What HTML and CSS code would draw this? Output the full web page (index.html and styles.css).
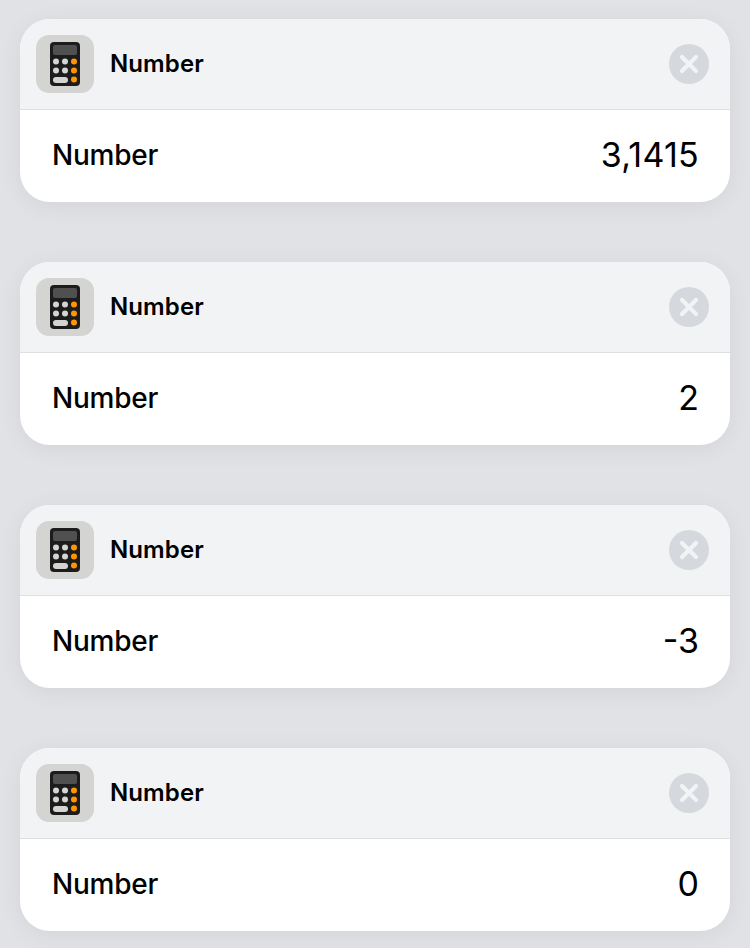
FILE: index.html
```html
<!DOCTYPE html>
<html lang="en">
<head>
<meta charset="utf-8">
<title>Number</title>
<link rel="stylesheet" href="styles.css">
</head>
<body>
<svg class="defs" width="0" height="0" aria-hidden="true">
  <symbol id="calc" viewBox="0 0 58 58">
    <rect x="14" y="7" width="30" height="44" rx="4" fill="#1c1c1c"/>
    <rect x="17" y="10" width="24" height="10" rx="2" fill="#505050"/>
    <g fill="#d4d4d2">
      <circle cx="20" cy="26.5" r="3"/><circle cx="29" cy="26.5" r="3"/>
      <circle cx="20" cy="35.5" r="3"/><circle cx="29" cy="35.5" r="3"/>
      <rect x="17" y="42" width="15" height="6" rx="3"/>
    </g>
    <g fill="#ff9500">
      <circle cx="38" cy="26.5" r="3"/><circle cx="38" cy="35.5" r="3"/><circle cx="38" cy="44.5" r="3"/>
    </g>
  </symbol>
  <symbol id="close" viewBox="0 0 40 40">
    <circle cx="20" cy="20" r="20" fill="#d5d8dd"/>
    <path d="M13 13 27 27M27 13 13 27" stroke="#f2f3f5" stroke-width="4.2" stroke-linecap="round"/>
  </symbol>
</svg>
<main class="list">
  <section class="card">
    <header class="head"><svg class="icon"><use href="#calc"/></svg><h2 class="title">Number</h2><svg class="close"><use href="#close"/></svg></header>
    <div class="row"><span class="label">Number</span><span class="value decimal">3,1415</span></div>
  </section>
  <section class="card">
    <header class="head"><svg class="icon"><use href="#calc"/></svg><h2 class="title">Number</h2><svg class="close"><use href="#close"/></svg></header>
    <div class="row"><span class="label">Number</span><span class="value">2</span></div>
  </section>
  <section class="card">
    <header class="head"><svg class="icon"><use href="#calc"/></svg><h2 class="title">Number</h2><svg class="close"><use href="#close"/></svg></header>
    <div class="row"><span class="label">Number</span><span class="value">-3</span></div>
  </section>
  <section class="card">
    <header class="head"><svg class="icon"><use href="#calc"/></svg><h2 class="title">Number</h2><svg class="close"><use href="#close"/></svg></header>
    <div class="row"><span class="label">Number</span><span class="value">0</span></div>
  </section>
</main>
</body>
</html>
```
FILE: styles.css
```css
* { box-sizing: border-box; }
body { margin: 0; height: 948px; overflow: hidden; background: #e1e2e6; color: #000; font-family: Inter, "Liberation Sans", sans-serif; }
.defs { display: block; }
.list { display: flex; flex-direction: column; gap: 60px; padding: 19px 20px 0; }
.card { height: 183px; border-radius: 30px; background: #fff; overflow: hidden; box-shadow: 0 4px 24px rgba(0, 0, 0, 0.06); }
.head { display: flex; align-items: center; height: 91px; padding: 0 21px 0 16px; background: #f2f3f5; border-bottom: 1px solid #dedfe1; }
.icon { width: 58px; height: 58px; border-radius: 13px; background: #d4d4d2; }
.title { margin: 0 auto 0 16px; font-size: 24px; line-height: 30px; font-weight: 600; letter-spacing: 0.1px; }
.close { width: 40px; height: 40px; }
.row { display: flex; align-items: center; justify-content: space-between; height: 92px; padding: 0 31px 2px 32px; }
.label { font-size: 28px; line-height: 34px; font-weight: 500; letter-spacing: -0.25px; }
.value { font-size: 34px; line-height: 42px; font-weight: 400; }
.decimal { letter-spacing: 0.25px; }
```
